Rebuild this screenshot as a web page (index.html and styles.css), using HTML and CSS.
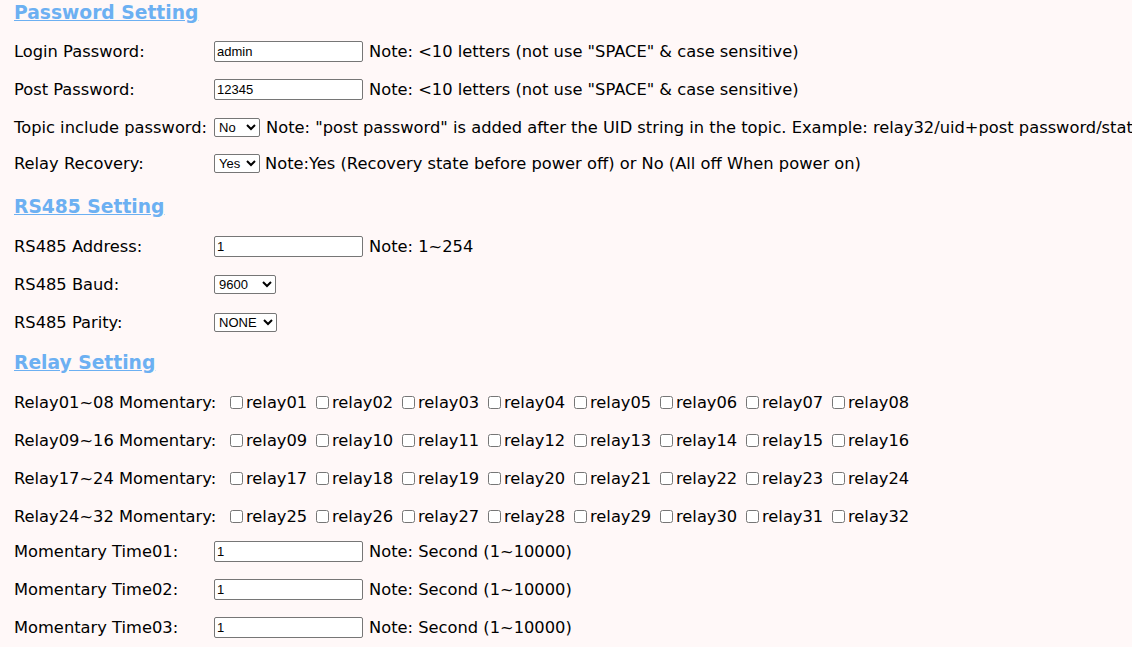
FILE: index.html
```html
<!DOCTYPE html>
<html>
<head>
<meta charset="utf-8">
<link rel="stylesheet" href="styles.css">
</head>
<body>
<div class="page">
  <h2 class="sec-title first"><a href="#">Password Setting</a></h2>
  <div class="section s1">
    <div class="row"><div class="label">Login Password:</div><input class="txt" type="text" value="admin"><span class="note">Note: &lt;10 letters (not use "SPACE" &amp; case sensitive)</span></div>
    <div class="row"><div class="label">Post Password:</div><input class="txt" type="text" value="12345"><span class="note">Note: &lt;10 letters (not use "SPACE" &amp; case sensitive)</span></div>
    <div class="row"><div class="label">Topic include password:</div><select class="sel yn"><option>No</option><option>Yes</option></select><span class="note">Note: "post password" is added after the UID string in the topic. Example: relay32/uid+post password/state</span></div>
    <div class="row short"><div class="label">Relay Recovery:</div><select class="sel yn"><option>Yes</option><option>No</option></select><span class="note tight">Note:Yes (Recovery state before power off) or No (All off When power on)</span></div>
  </div>

  <h2 class="sec-title"><a href="#">RS485 Setting</a></h2>
  <div class="section s2">
    <div class="row"><div class="label">RS485 Address:</div><input class="txt" type="text" value="1"><span class="note">Note: 1~254</span></div>
    <div class="row"><div class="label">RS485 Baud:</div><select class="sel baud"><option>9600</option><option>19200</option><option>115200</option></select></div>
    <div class="row"><div class="label">RS485 Parity:</div><select class="sel parity"><option>NONE</option><option>ODD</option><option>EVEN</option></select></div>
  </div>

  <h2 class="sec-title third"><a href="#">Relay Setting</a></h2>
  <div class="section s3">
    <div class="row"><div class="label wide">Relay01~08 Momentary:</div><div class="checks" id="g1"></div></div>
    <div class="row"><div class="label wide">Relay09~16 Momentary:</div><div class="checks" id="g2"></div></div>
    <div class="row"><div class="label wide">Relay17~24 Momentary:</div><div class="checks" id="g3"></div></div>
    <div class="row"><div class="label wide">Relay24~32 Momentary:</div><div class="checks" id="g4"></div></div>
  </div>
  <div class="section times">
    <div class="row"><div class="label">Momentary Time01:</div><input class="txt" type="text" value="1"><span class="note">Note: Second (1~10000)</span></div>
    <div class="row"><div class="label">Momentary Time02:</div><input class="txt" type="text" value="1"><span class="note">Note: Second (1~10000)</span></div>
    <div class="row"><div class="label">Momentary Time03:</div><input class="txt" type="text" value="1"><span class="note">Note: Second (1~10000)</span></div>
  </div>
</div>
<script>
  for (var g = 0; g < 4; g++) {
    var box = document.getElementById('g' + (g + 1));
    var html = '';
    for (var i = 1; i <= 8; i++) {
      var n = g * 8 + i;
      var s = n < 10 ? '0' + n : '' + n;
      html += '<label class="chk"><input type="checkbox">relay' + s + '</label>';
    }
    box.innerHTML = html;
  }
</script>
</body>
</html>
```

FILE: styles.css
```css
html, body {
  margin: 0;
  padding: 0;
  background: #fff8f8;
  overflow: hidden;
}
body {
  font-family: "DejaVu Sans", sans-serif;
  font-size: 16.3px;
  color: #000;
}
.page {
  padding-left: 14px;
  width: 1400px;
}
.sec-title {
  margin: 14px 0 0 0;
  height: 26px;
  line-height: 26px;
  font-size: 18.7px;
  font-weight: bold;
}
.sec-title.first { margin-top: 0; }
.sec-title.third { margin-top: 9px; }
.sec-title a {
  color: #6cb0f2;
  text-decoration: underline;
}
.section { margin-top: 6px; }
.section.s2 { margin-top: 7px; }
.section.s3 { margin-top: 7px; }
.section.times { margin-top: -3px; }
.row {
  display: flex;
  align-items: center;
  height: 38px;
  white-space: nowrap;
}
.row.short { height: 34px; }
.label {
  width: 200px;
  flex: none;
}
.label.wide { width: 212px; }
.txt {
  box-sizing: border-box;
  width: 149px;
  height: 21px;
  margin: 0 6px 0 0;
  padding: 1px 2px;
  border: 1px solid #767676;
  border-radius: 2px;
  background: #fff;
  font-family: "Liberation Sans", Arial, sans-serif;
  font-size: 13px;
  color: #000;
}
.sel {
  margin: 0 6px 0 0;
  height: 19px;
  font-family: "Liberation Sans", Arial, sans-serif;
  font-size: 13px;
  color: #000;
  background: #fff;
  border: 1px solid #767676;
  border-radius: 2px;
}
.sel.yn { width: 46px; }
.sel.baud { width: 62px; }
.sel.parity { width: 63px; }
.note.tight { margin-left: -1px; }
.checks {
  display: flex;
}
.chk {
  display: inline-flex;
  align-items: center;
  width: 86px;
}
.chk input {
  margin: 0 3px 0 4px;
  width: 13px;
  height: 13px;
}
```
